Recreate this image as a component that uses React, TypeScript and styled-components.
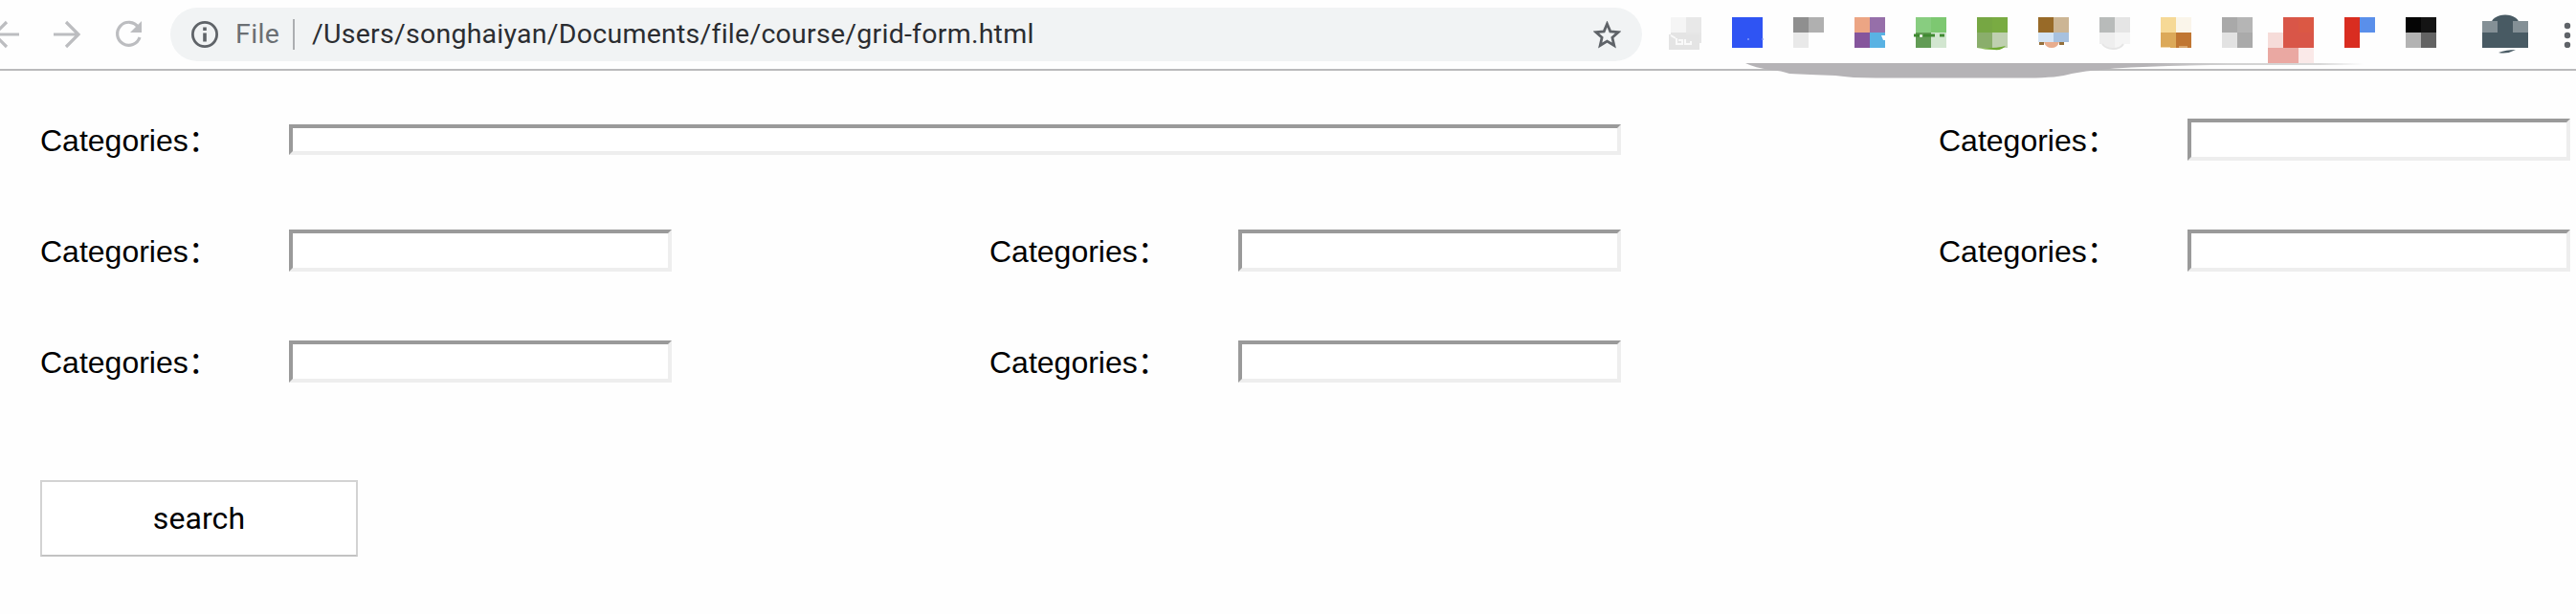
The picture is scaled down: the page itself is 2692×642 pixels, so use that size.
import React from "react";
import styled, { createGlobalStyle } from "styled-components";

const GlobalStyle = createGlobalStyle`
  * { box-sizing: border-box; }
  body { margin: 0; background: #fefefe; color: #000; font-family: "Liberation Sans", "Noto Sans CJK SC", sans-serif; }
`;

const Page = styled.div`
  width: 2692px;
  height: 642px;
  overflow: hidden;
  background: #fefefe;
`;

const Toolbar = styled.header`
  position: relative;
  display: flex;
  align-items: center;
  height: 74px;
  border-bottom: 2px solid #bababb;
`;

const NavIcons = styled.div`
  display: flex;
  width: 178px;
  flex: none;
`;

const AddressBar = styled.div`
  display: flex;
  align-items: center;
  width: 1538px;
  height: 56px;
  padding: 0 22px;
  border-radius: 28px;
  background: #f1f3f4;
  font-family: Roboto, sans-serif;
  font-size: 28.5px;
  line-height: 36px;
  white-space: nowrap;
`;

const Scheme = styled.span`
  width: 44px;
  margin-left: 18px;
  color: #6b6f73;
  letter-spacing: 0.4px;
`;

const Divider = styled.span`
  width: 2px;
  height: 32px;
  margin: 0 18px 0 16px;
  background: #acaeb1;
`;

const Url = styled.span`
  flex: 1;
  color: #2b2d31;
  letter-spacing: 0.25px;
`;

const Extensions = styled.div`
  display: flex;
  gap: 32px;
  margin: 0 0 4px 30px;
`;

const Pixels = styled.svg`
  display: block;
  width: 32px;
  height: 32px;
  overflow: visible;
`;

const Avatar = styled.svg`
  margin: 0 0 4px 48px;
  overflow: visible;
`;

const MenuDots = styled.svg`
  margin-left: 36px;
`;

const Stroke = styled.svg`
  position: absolute;
  left: 1820px;
  top: 64px;
`;

const Form = styled.form`
  display: grid;
  grid-template-columns: repeat(3, 660px);
  grid-auto-rows: 44px;
  column-gap: 332px;
  row-gap: 72px;
  padding: 50px 0 0 42px;
`;

const Field = styled.label<{ $span?: number }>`
  display: grid;
  grid-template-columns: 260px 1fr;
  align-items: center;
  grid-column: span ${(p) => p.$span ?? 1};
`;

const Label = styled.span`
  height: 44px;
  padding-top: 1px;
  font-size: 32px;
  line-height: 44px;
  white-space: nowrap;
`;

const Input = styled.input<{ $h?: number }>`
  width: 100%;
  height: ${(p) => p.$h ?? 44}px;
  padding: 0;
  border: 4px solid;
  border-color: #9a9a9a #eee #eee #9a9a9a;
  border-radius: 0;
  background: #fff;
  outline: 0;
`;

const SearchButton = styled.button`
  display: block;
  width: 332px;
  height: 80px;
  margin: 102px 0 0 42px;
  padding: 0;
  border: 2px solid #d3d3d3;
  border-bottom-color: #c2c2c2;
  background: #fff;
  color: #000;
  font-family: Roboto, sans-serif;
  font-size: 32px;
  letter-spacing: 0.1px;
`;

const tiles: [string, string, string, string][] = [
  ["#f5f5f5", "#e8e8e8", "#e4e4e4", "#e6e6e6"],
  ["#2f54f3", "#2f54f3", "#2f54f3", "#2f54f3"],
  ["#8f8f8f", "#b0b0b0", "#e9e9e9", "none"],
  ["#eca584", "#966fa9", "#85559c", "#59b2e3"],
  ["#88cd80", "#7dc871", "#629c55", "#d2e6d0"],
  ["#76a743", "#79ab42", "#8aae6b", "#bfd0b0"],
  ["#986a28", "#ccb594", "#d4e4f4", "#a7c1df"],
  ["#b8bbba", "#e5e5e5", "#eeeeee", "#f5f5f5"],
  ["#f6d996", "#faf5ea", "#dca959", "#c07632"],
  ["#a9a9a9", "#b5b5b5", "#e2e2e2", "#aaaaaa"],
  ["#d95648", "#db5844", "#d95648", "#d95648"],
  ["#d92d20", "#5a8fea", "#d92d20", "none"],
  ["#050505", "#141414", "#b3b3b3", "#636363"],
];

const details: Record<number, React.ReactNode> = {
  0: (
    <>
      <path d="M-2 18H30V34H-2z" fill="#e4e4e4" />
      <path d="M30 27H32V32H30z" fill="#fefefe" />
      <path d="M0 19L5 22M6 22V28H12V24H8M15 23V28H21V25" fill="none" stroke="#fafafa" strokeWidth="2" />
    </>
  ),
  1: <path d="M16 23h2M31 23h2" stroke="#8599f6" strokeWidth="1.5" />,
  3: <path d="M28 19h4v5h-2z" fill="#fefefe" />,
  4: (
    <>
      <path d="M-2 19H4M8 19H20M25 19H30" stroke="#3f8a31" strokeWidth="3" />
      <circle cx="5.500" cy="19.500" r="1.500" fill="#fefefe" />
    </>
  ),
  5: <path d="M0 32Q18 33 30 30Q26 35 18 34Q8 34 0 32" fill="#6faa32" />,
  6: (
    <>
      <path d="M0 26H32V32H0z" fill="#fefefe" />
      <path d="M1 27.500H6M22 27.500H27" stroke="#94703c" strokeWidth="3" />
      <path d="M6 26H22Q20 32 14 32Q8 32 6 26" fill="#e8ad8e" />
    </>
  ),
  7: (
    <>
      <path d="M0 28H4L8 32H0zM25 28H32V32H21z" fill="#fefefe" />
      <path d="M3 28Q7 33 14 33Q22 33 25 28" fill="none" stroke="#e5e5e5" strokeWidth="2" />
    </>
  ),
  8: <path d="M0 31.5H10M19 31H28" stroke="#f3d8a8" strokeWidth="1" />,
  10: (
    <>
      <path d="M-16 16H0V32H-16z" fill="#f6dcd9" />
      <path d="M-16 32H16V48H-16z" fill="#eaa8a2" />
      <path d="M16 32H32V48H16z" fill="#fae9e8" />
    </>
  ),
};

const cells = [[0, 0], [16, 0], [0, 16], [16, 16]];

function Tile({ index }: { index: number }) {
  return (
    <Pixels viewBox="0 0 32 32">
      {cells.map(([x, y], i) => (
        <rect key={i} x={x} y={y} width="16" height="16" fill={tiles[index][i]} />
      ))}
      {details[index]}
    </Pixels>
  );
}

const fields: { span?: number; h?: number }[] = [{ span: 2, h: 32 }, {}, {}, {}, {}, {}, {}];

export default function App() {
  return (
    <Page>
      <GlobalStyle />
      <Toolbar>
        <NavIcons>
          <svg width="178" height="56" fill="none" stroke="#bcbdc0" strokeWidth="3.2">
            <path d="M20 28H-6M7 15L-6 28L7 41" />
            <path d="M56 28H82M69 15L82 28L69 41" />
            <path d="M144.500 20.500A12 12 0 1 0 146 31" />
            <path d="M148 14V26H136z" fill="#bcbdc0" stroke="none" />
          </svg>
        </NavIcons>
        <AddressBar>
          <svg width="28" height="28" fill="none" stroke="#5f6368" strokeWidth="2.8">
            <circle cx="14" cy="14" r="12.600" />
            <path d="M14 12.500V21.500" strokeWidth="3.600" />
            <path d="M14 6.500V10" strokeWidth="3.600" />
          </svg>
          <Scheme>File</Scheme>
          <Divider />
          <Url>/Users/songhaiyan/Documents/file/course/grid-form.html</Url>
          <svg width="29" height="29" viewBox="0 0 29 29" fill="none" stroke="#5f6368" strokeWidth="2.800">
            <path d="M14.500 3L17.800 10.900L26.300 11.600L19.900 17.200L21.800 25.500L14.500 21.100L7.200 25.500L9.100 17.200L2.700 11.600L11.200 10.900Z" />
          </svg>
        </AddressBar>
        <Extensions>
          {tiles.map((_, i) => (
            <Tile key={i} index={i} />
          ))}
        </Extensions>
        <Avatar width="48" height="40">
          <ellipse cx="24" cy="12" rx="15" ry="10.500" fill="#485a63" />
          <path d="M0 8H48V36H0z" fill="#485a63" />
          <path d="M0 8H16V20H0zM32 8H48V20H32z" fill="#849096" />
          <path d="M17 41Q26 43 35 38Q25 38 17 41" fill="#485a63" />
        </Avatar>
        <MenuDots width="12" height="28" fill="#5f6368">
          <circle cx="5" cy="5" r="3.200" />
          <circle cx="5" cy="15" r="3.200" />
          <circle cx="5" cy="25" r="3.200" />
        </MenuDots>
        <Stroke width="660" height="20">
          <defs>
            <linearGradient id="tail" x1="0" x2="1">
              <stop offset="0.650" stopColor="#b5b3b6" />
              <stop offset="0.780" stopColor="#d2d2d2" />
              <stop offset="0.930" stopColor="#d8d8d8" />
              <stop offset="1" stopColor="#fefefe" />
            </linearGradient>
          </defs>
          <path
            d="M4 2H650V4H490Q430 5 390 7.500L375 9Q360 10 345 13Q330 17.500 300 17.500H140Q115 17.500 98 15Q70 14 50 13Q42 10 30 9Q14 7 4 2"
            fill="url(#tail)"
          />
        </Stroke>
      </Toolbar>
      <Form>
        {fields.map((f, i) => (
          <Field key={i} $span={f.span}>
            <Label lang="zh-CN">{"Categories\uff1a"}</Label>
            <Input $h={f.h} />
          </Field>
        ))}
      </Form>
      <SearchButton type="button">search</SearchButton>
    </Page>
  );
}
